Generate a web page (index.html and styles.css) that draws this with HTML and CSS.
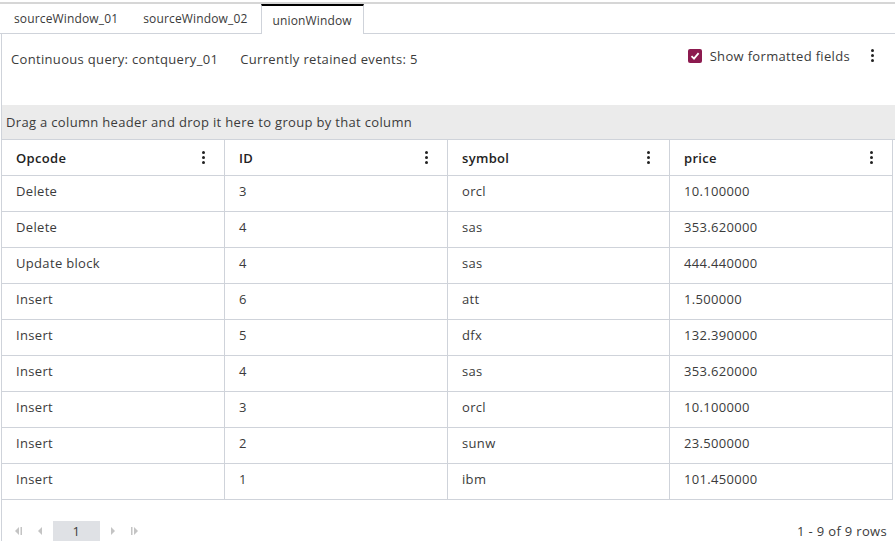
FILE: index.html
```html
<!DOCTYPE html>
<html>
<head>
<meta charset="utf-8">
<link rel="stylesheet" href="styles.css">
</head>
<body>
<div class="tabs">
  <div class="tab">sourceWindow_01</div>
  <div class="tab">sourceWindow_02</div>
  <div class="tab active">unionWindow</div>
</div>
<div class="panel">
  <div class="info">
    <div class="info-left">
      <span>Continuous query: contquery_01</span>
      <span>Currently retained events: 5</span>
    </div>
    <div class="info-right">
      <span class="checkbox"><svg width="10" height="10" viewBox="0 0 10 10"><path d="M1.5 5.2 L4 7.6 L8.6 2.2" fill="none" stroke="#fff" stroke-width="1.8"/></svg></span>
      <span class="cb-label">Show formatted fields</span>
      <span class="kebab big"><i></i><i></i><i></i></span>
    </div>
  </div>
  <div class="groupbar">Drag a column header and drop it here to group by that column</div>
  <div class="grid">
    <div class="hcell"><span>Opcode</span><span class="kebab"><i></i><i></i><i></i></span></div>
    <div class="hcell"><span>ID</span><span class="kebab"><i></i><i></i><i></i></span></div>
    <div class="hcell"><span>symbol</span><span class="kebab"><i></i><i></i><i></i></span></div>
    <div class="hcell"><span>price</span><span class="kebab"><i></i><i></i><i></i></span></div>

    <div class="cell">Delete</div><div class="cell">3</div><div class="cell">orcl</div><div class="cell">10.100000</div>
    <div class="cell">Delete</div><div class="cell">4</div><div class="cell">sas</div><div class="cell">353.620000</div>
    <div class="cell">Update block</div><div class="cell">4</div><div class="cell">sas</div><div class="cell">444.440000</div>
    <div class="cell">Insert</div><div class="cell">6</div><div class="cell">att</div><div class="cell">1.500000</div>
    <div class="cell">Insert</div><div class="cell">5</div><div class="cell">dfx</div><div class="cell">132.390000</div>
    <div class="cell">Insert</div><div class="cell">4</div><div class="cell">sas</div><div class="cell">353.620000</div>
    <div class="cell">Insert</div><div class="cell">3</div><div class="cell">orcl</div><div class="cell">10.100000</div>
    <div class="cell">Insert</div><div class="cell">2</div><div class="cell">sunw</div><div class="cell">23.500000</div>
    <div class="cell">Insert</div><div class="cell">1</div><div class="cell">ibm</div><div class="cell">101.450000</div>
  </div>
  <div class="footer">
    <div class="pager">
      <svg class="pg" width="9" height="8" viewBox="0 0 9 8"><path d="M5 0 L1 4 L5 8 Z" fill="#c4c4c4"/><rect x="6.5" y="0" width="1.5" height="8" fill="#c4c4c4"/></svg>
      <svg class="pg" width="6" height="8" viewBox="0 0 6 8"><path d="M5 0 L1 4 L5 8 Z" fill="#c4c4c4"/></svg>
      <span class="page">1</span>
      <svg class="pg" width="6" height="8" viewBox="0 0 6 8"><path d="M1 0 L5 4 L1 8 Z" fill="#c4c4c4"/></svg>
      <svg class="pg" width="9" height="8" viewBox="0 0 9 8"><rect x="1" y="0" width="1.5" height="8" fill="#c4c4c4"/><path d="M4 0 L8 4 L4 8 Z" fill="#c4c4c4"/></svg>
    </div>
    <div class="count">1 - 9 of 9 rows</div>
  </div>
</div>
</body>
</html>
```
FILE: styles.css
```css
html, body {
  margin: 0;
  padding: 0;
  background: #fff;
}
body {
  font-family: "Open Sans", "Liberation Sans", sans-serif;
  color: #333;
  padding-top: 2px;
  letter-spacing: 0.33px;
}
.tabs {
  display: flex;
  border-top: 2px solid #d6d6d6;
  border-bottom: 1px solid #cfd3da;
  height: 29px;
  padding-left: 2px;
}
.tab {
  font-size: 12px;
  letter-spacing: 0.15px;
  color: #3a3a3a;
  padding: 1px 12px 0;
  line-height: 28px;
  margin-right: 1px;
}
.tab.active {
  border-top: 2px solid #000;
  border-left: 1px solid #cfd3da;
  border-right: 1px solid #cfd3da;
  background: #fff;
  margin-bottom: -1px;
  line-height: 28px;
  padding: 1px 11px 0;
  height: 27px;
}
.panel {
  margin-left: 1px;
  border-left: 1px solid #cfd3da;
}
.info {
  display: flex;
  justify-content: space-between;
  height: 71px;
  font-size: 13px;
}
.info-left {
  display: flex;
  gap: 22px;
  padding: 16px 0 0 9px;
  color: #3b3b3b;
}
.info-right {
  display: flex;
  align-items: flex-start;
  padding-top: 14px;
  padding-right: 21px;
}
.checkbox {
  width: 14px;
  height: 14px;
  border-radius: 2px;
  background: #8c1a4f;
  display: flex;
  align-items: center;
  justify-content: center;
  margin-top: 1px;
  margin-right: 8px;
}
.cb-label {
  color: #3b3b3b;
  line-height: 16px;
}
.kebab {
  display: flex;
  flex-direction: column;
  gap: 2px;
  width: 3px;
}
.kebab i {
  display: block;
  width: 3px;
  height: 3px;
  border-radius: 50%;
  background: #222;
}
.kebab.big {
  margin-left: 21px;
  margin-top: 1px;
}
.groupbar {
  height: 34px;
  background: #ebebeb;
  border-bottom: 1px solid #cfd3da;
  font-size: 13px;
  line-height: 35px;
  padding-left: 4px;
  color: #3b3b3b;
}
.grid {
  display: grid;
  grid-template-columns: 223px 223px 222px 223px;
}
.hcell, .cell {
  box-sizing: border-box;
  height: 36px;
  border-right: 1px solid #cfd3da;
  border-bottom: 1px solid #cfd3da;
  font-size: 13px;
  padding-left: 14px;
}
.hcell {
  display: flex;
  align-items: center;
  justify-content: space-between;
  padding-right: 19px;
  font-weight: 600;
  color: #222;
}
.cell {
  line-height: 30px;
  color: #3b3b3b;
}
.footer {
  display: flex;
  justify-content: space-between;
  align-items: center;
  height: 41px;
  padding-top: 21px;
  box-sizing: border-box;
}
.pager {
  display: flex;
  align-items: center;
  padding-left: 10px;
}
.pg { margin: 0 7px; }
.pg:first-child { margin-left: 2px; }
.page {
  display: inline-block;
  width: 47px;
  height: 20px;
  background: #dfe1e5;
  text-align: center;
  font-size: 13px;
  line-height: 20px;
  color: #3b3b3b;
  margin: 0 3px;
}
.count {
  font-size: 13px;
  color: #3b3b3b;
  padding-right: 8px;
}
```
